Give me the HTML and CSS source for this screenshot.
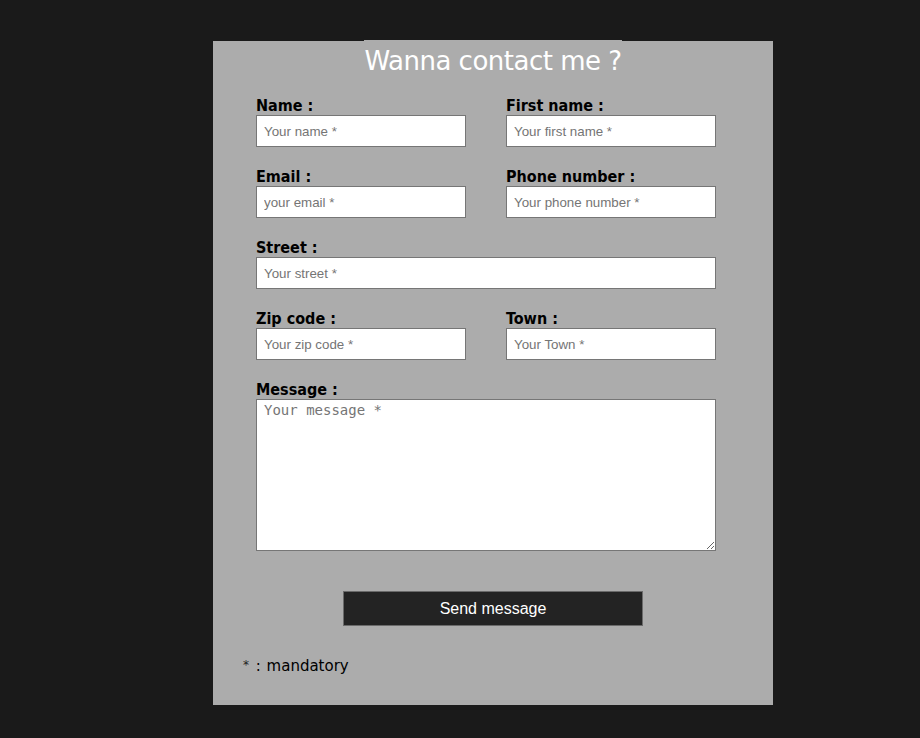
FILE: index.html
```html
<!DOCTYPE html>
<html lang="en">
<head>
<meta charset="utf-8">
<title>Contact</title>
<link rel="stylesheet" href="styles.css">
</head>
<body>
<div class="panel">
  <div class="title-wrap"><h1 class="title">Wanna contact me ?</h1></div>
  <form class="form">
    <div class="grid">
      <div class="field"><label class="label">Name :</label><input class="input" type="text" placeholder="Your name *"></div>
      <div class="field"><label class="label">First name :</label><input class="input" type="text" placeholder="Your first name *"></div>
      <div class="field"><label class="label">Email :</label><input class="input" type="text" placeholder="your email *"></div>
      <div class="field"><label class="label">Phone number :</label><input class="input" type="text" placeholder="Your phone number *"></div>
      <div class="field wide"><label class="label">Street :</label><input class="input" type="text" placeholder="Your street *"></div>
      <div class="field"><label class="label">Zip code :</label><input class="input" type="text" placeholder="Your zip code *"></div>
      <div class="field"><label class="label">Town :</label><input class="input" type="text" placeholder="Your Town *"></div>
      <div class="field wide"><label class="label">Message :</label><textarea class="textarea" placeholder="Your message *"></textarea></div>
    </div>
    <div class="actions"><button class="button" type="button">Send message</button></div>
    <p class="note"><span class="star">*</span> : mandatory</p>
  </form>
</div>
</body>
</html>
```
FILE: styles.css
```css
html, body {
  margin: 0;
  padding: 0;
}
body {
  background: #1a1a1a;
  width: 920px;
  height: 738px;
  overflow: hidden;
}
.panel {
  width: 560px;
  height: 664px;
  margin: 41px 0 0 213px;
  background: #acacac;
  box-sizing: border-box;
}
.title-wrap {
  text-align: center;
}
.title {
  display: inline-block;
  margin: -1px 0 0 0;
  background: #acacac;
  color: #ffffff;
  font-family: "DejaVu Sans", sans-serif;
  font-weight: normal;
  font-size: 26px;
  letter-spacing: -0.5px;
  line-height: 42px;
}
.form {
  margin: 0;
}
.grid {
  margin: 13px 0 0 43px;
  width: 460px;
  display: grid;
  grid-template-columns: 210px 210px;
  column-gap: 40px;
  row-gap: 19px;
}
.field {
  display: flex;
  flex-direction: column;
}
.wide {
  grid-column: 1 / span 2;
}
.label {
  font-family: "DejaVu Sans Condensed", "DejaVu Sans", sans-serif;
  font-stretch: condensed;
  font-weight: bold;
  font-size: 16px;
  line-height: 19px;
  padding-top: 1px;
  color: #000;
}
.input {
  box-sizing: border-box;
  height: 32px;
  width: 100%;
  margin: 0;
  border: 1px solid #767676;
  background: #fff;
  padding: 0 7px;
  font-family: "Liberation Sans", Arial, sans-serif;
  font-size: 13.33px;
  outline: none;
}
.input::placeholder {
  color: #757575;
}
.textarea {
  box-sizing: border-box;
  height: 152px;
  width: 100%;
  margin: 0;
  border: 1px solid #767676;
  background: #fff;
  padding: 2px 7px;
  font-family: "DejaVu Sans Mono", monospace;
  font-size: 14px;
  resize: both;
  outline: none;
}
.textarea::placeholder {
  color: #757575;
}
.actions {
  margin-top: 40px;
  display: flex;
  justify-content: center;
}
.button {
  box-sizing: border-box;
  width: 300px;
  height: 35px;
  background: #232323;
  border: 1px solid #6a6a6a;
  color: #fff;
  font-family: "Liberation Sans", Arial, sans-serif;
  font-size: 16px;
  padding: 0;
}
.note {
  margin: 29px 0 0 30px;
  font-family: "DejaVu Sans", sans-serif;
  font-size: 15px;
  line-height: 20px;
  color: #000;
  word-spacing: 1px;
}
.star {
  font-size: 12px;
  vertical-align: 2px;
  color: #222;
  margin-right: 1px;
}
```
